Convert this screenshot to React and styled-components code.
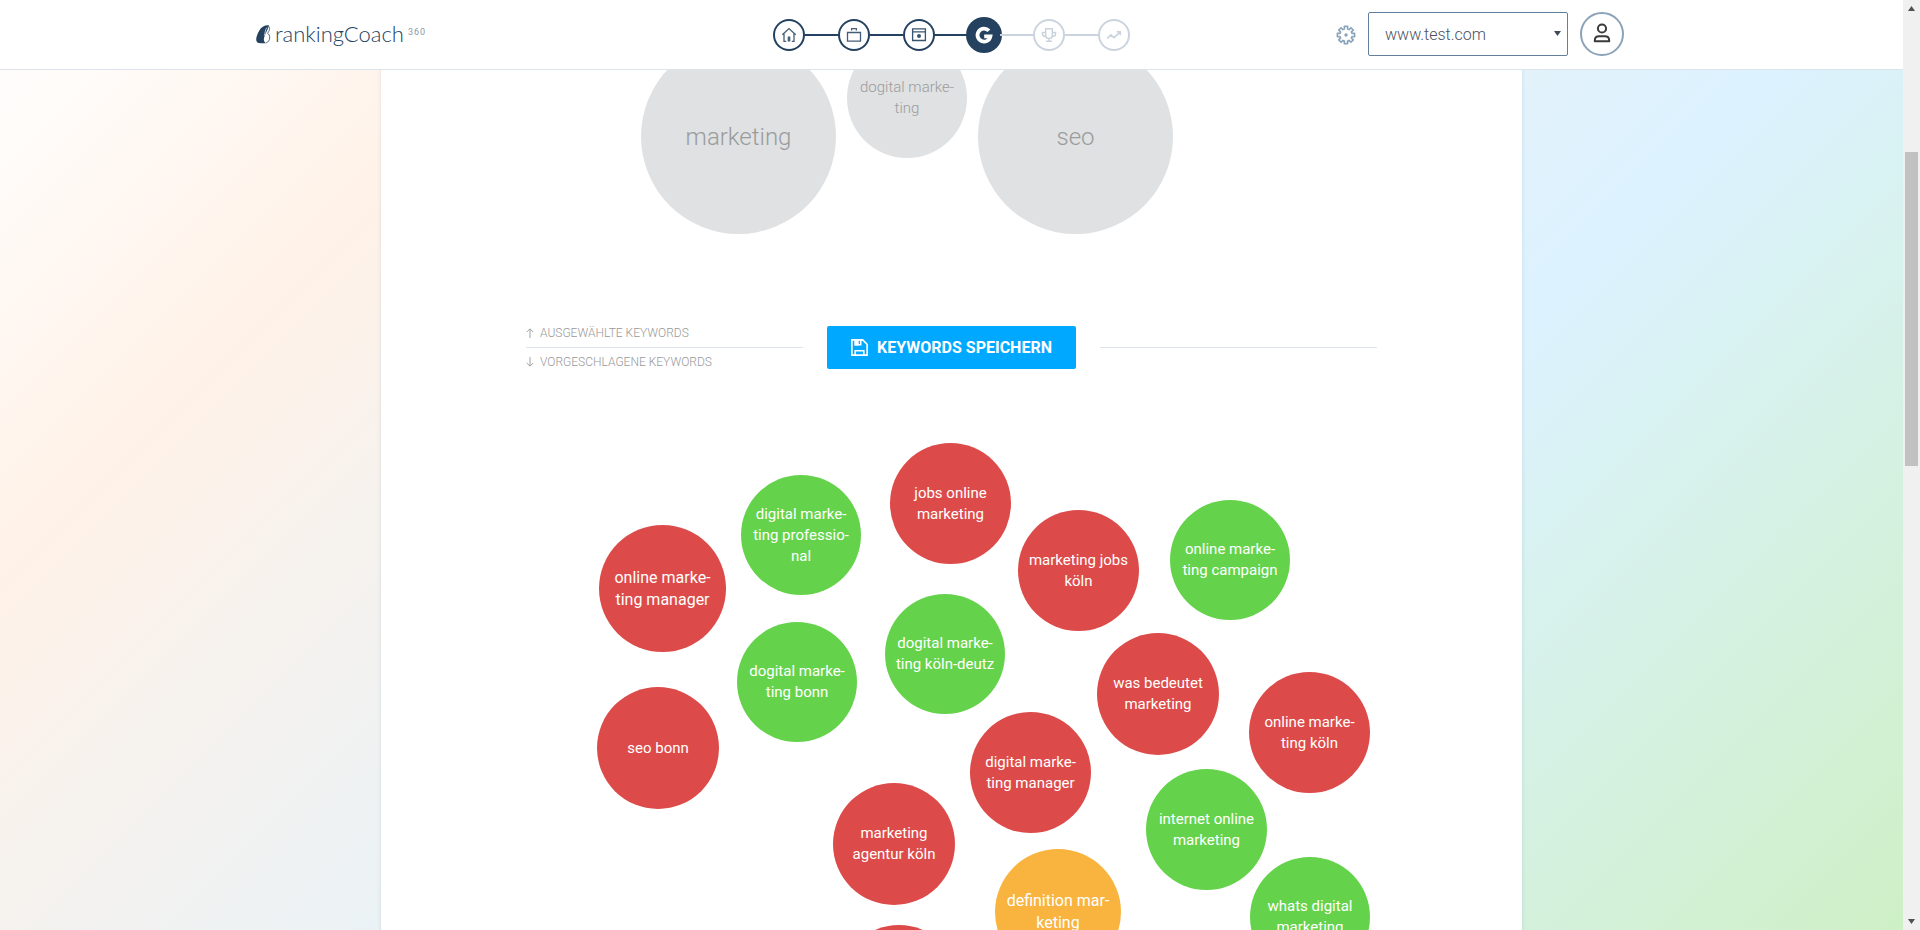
import React from "react";
import styled, { createGlobalStyle } from "styled-components";

const navy = "#24425f";
const tones = {
  red: "#dc4b49",
  green: "#64d34b",
  amber: "#f9b43f",
};

const GlobalStyle = createGlobalStyle`
  *, *::before, *::after { box-sizing: border-box; }
  body {
    margin: 0;
    font-family: Roboto, "Liberation Sans", sans-serif;
    overflow: hidden;
  }
  button, select { font: inherit; cursor: pointer; }
`;

const Shell = styled.div`
  display: grid;
  grid-template-columns: minmax(0, 1fr) 17px;
  height: 100vh;
`;

const Viewport = styled.div`
  position: relative;
  overflow: hidden;
  background: linear-gradient(135deg, #ffffff 0%, #fff2e8 20%, #dcf2ff 65%, #cef0c6 100%);
`;

/* Header */

const Header = styled.header`
  position: absolute;
  inset: 0 0 auto 0;
  z-index: 2;
  height: 70px;
  background: rgba(255, 255, 255, 0.98);
  border-bottom: 1px solid #dce3ea;
`;

const HeaderInner = styled.div`
  display: grid;
  grid-template-columns: 1fr auto 1fr;
  align-items: center;
  max-width: 1391px;
  height: 68px;
  margin: 0 auto;
`;

const Brand = styled.a`
  display: flex;
  align-items: center;
  gap: 4px;
  color: ${navy};
  text-decoration: none;
`;

const BrandName = styled.span`
  font-family: Lato, "Liberation Sans", sans-serif;
  font-size: 22px;
  font-weight: 300;
  line-height: 28px;
`;

const BrandSuffix = styled.sup`
  align-self: flex-start;
  color: #8b97a5;
  font-size: 9px;
  line-height: 24px;
  letter-spacing: 1px;
`;

const Steps = styled.nav`
  display: flex;
  align-items: center;
  padding-top: 2px;
`;

const Step = styled.button`
  display: block;
  width: 32px;
  height: 32px;
  padding: 0;
  border: 0;
  border-radius: 50%;
  color: ${(p) => (p.$state === "active" ? "#fff" : p.$state === "todo" ? "#cbd4de" : navy)};
  background: ${(p) => (p.$state === "active" ? navy : "transparent")};
  box-shadow: ${(p) => (p.$state === "active" ? `0 0 0 2px ${navy}` : "inset 0 0 0 2px currentColor")};

  svg { display: block; }
`;

const StepLink = styled.span`
  width: 33px;
  height: 2px;
  background: ${(p) => (p.$todo ? "#cbd4de" : navy)};
`;

const Tools = styled.div`
  display: flex;
  align-items: center;
  justify-content: flex-end;
  gap: 12px;
  padding-right: 23px;
`;

const GearButton = styled.button`
  display: flex;
  padding: 2px 0 0;
  border: 0;
  background: none;
  color: #8ba4ba;
`;

const SelectWrap = styled.div`
  position: relative;
  width: 200px;

  svg {
    position: absolute;
    top: 19px;
    right: 7px;
    pointer-events: none;
  }
`;

const SiteSelect = styled.select`
  appearance: none;
  width: 100%;
  height: 44px;
  padding: 0 24px 0 16px;
  border: 1px solid #637f99;
  border-radius: 2px;
  background: #fff;
  color: #4a5160;
  font-size: 16px;
  font-weight: 300;
`;

const Avatar = styled.button`
  width: 44px;
  height: 44px;
  padding: 0;
  border: 2px solid #8ba2b8;
  border-radius: 50%;
  background: #fff;
  color: #3b3b3b;

  svg { display: block; }
`;

/* Keyword panel */

const Panel = styled.main`
  max-width: 1141px;
  min-height: 100%;
  margin: 0 auto;
  padding: 0 145px;
  background: #fff;
  box-shadow: 0 0 4px rgba(60, 100, 130, 0.15);
`;

const Board = styled.section`
  position: relative;
  height: ${(p) => p.$height}px;
`;

const Bubble = styled.button`
  position: absolute;
  display: flex;
  align-items: center;
  justify-content: center;
  padding: 0 10px;
  border: 0;
  border-radius: 50%;
  background: ${(p) => tones[p.$tone] || "#dfe1e3"};
  color: ${(p) => (tones[p.$tone] ? "#fff" : "#9a9c9c")};
  font-size: ${(p) => (p.$size > 150 ? 24 : p.$size > 124 ? 16 : 15)}px;
  font-weight: ${(p) => (tones[p.$tone] ? 400 : 300)};
  line-height: ${(p) => (p.$size > 150 ? 32 : p.$size > 124 ? 22 : 21)}px;
  text-align: center;
  hyphens: manual;
`;

const SaveRow = styled.div`
  display: grid;
  grid-template-columns: 1fr auto 1fr;
  align-items: center;
  gap: 24px;
`;

const Legend = styled.div`
  display: flex;
  flex-direction: column;
`;

const LegendLabel = styled.span`
  display: flex;
  align-items: center;
  gap: 6px;
  height: 28px;
  color: #999;
  font-size: 12px;
  font-weight: 300;
  text-transform: uppercase;
`;

const Rule = styled.span`
  display: block;
  height: 1px;
  background: #dfe3ea;
`;

const SaveButton = styled.button`
  display: flex;
  align-items: center;
  gap: 9px;
  height: 43px;
  padding: 0 24px;
  border: 0;
  border-radius: 2px;
  background: #00a8ff;
  color: #fff;
  font-size: 16px;
  font-weight: 700;
  text-transform: uppercase;
`;

/* Scrollbar */

const ScrollTrack = styled.div`
  display: flex;
  flex-direction: column;
  background: #f0f0f0;
`;

const ScrollArrow = styled.button`
  display: flex;
  align-items: center;
  justify-content: center;
  height: 17px;
  padding: 0;
  border: 0;
  background: none;
`;

const ScrollGap = styled.span`
  flex: ${(p) => p.$share} 1 0;
`;

const ScrollThumb = styled.span`
  flex: 314 1 0;
  margin: 0 2px;
  background: #c1c1c1;
`;

/* Icons */

const StepIcon = ({ children }) => (
  <svg width="32" height="32" viewBox="0 0 32 32" fill="none" stroke="currentColor" strokeWidth="1.3" aria-hidden="true">
    {children}
  </svg>
);

const steps = [
  {
    label: "Start",
    state: "done",
    icon: (
      <g opacity=".85">
        <path d="M9.3 15.8 16 9.6l6.7 6.2M11 14.8v7.5h2.2M21 14.8v7.5h-2.2" />
        <path d="M14.7 17.6h2.6v5h-2.6z" fill="currentColor" stroke="none" />
      </g>
    ),
  },
  {
    label: "Unternehmen",
    state: "done",
    icon: <path opacity=".85" d="M9.5 13.5h13v8.7h-13zM13.6 11.6V9.7h4.8v1.9" />,
  },
  {
    label: "Website",
    state: "done",
    icon: (
      <g opacity=".9">
        <path d="M9.6 9.8h12.8v11.7H9.6zM9.6 12.8h12.8" />
        <circle cx="16" cy="17" r="2" fill="currentColor" stroke="none" />
      </g>
    ),
  },
  {
    label: "Google",
    state: "active",
    icon: <path strokeWidth="3.8" d="M20.9 11.8A6.5 6.5 0 1 0 22.4 17.3H16.2" />,
  },
  {
    label: "Erfolge",
    state: "todo",
    icon: (
      <path
        strokeWidth="1.5"
        d="M12.7 9.8h6.6v7c0 1.8-1.2 2.8-3.3 2.8s-3.3-1-3.3-2.8zM12.7 13.6H9.5v1.6c0 1.6 1.3 2.2 3.4 2.2M19.3 13.6h3.2v1.6c0 1.6-1.3 2.2-3.4 2.2M16 19.6v2.4M13 22.3h6"
      />
    ),
  },
  {
    label: "Statistik",
    state: "todo",
    icon: <path strokeWidth="1.6" d="M9.2 19.5l3.6-3.6 3.2 2.8 6-5.6M18.8 12.8h3.5v3.4" />,
  },
];

const gearPath =
  Array.from({ length: 8 }, (_, i) =>
    [
      [-15, 6.2],
      [-11, 8.8],
      [11, 8.8],
      [15, 6.2],
    ]
      .map(([deg, r]) => {
        const a = ((i * 45 + deg) * Math.PI) / 180;
        return `${(10 + r * Math.sin(a)).toFixed(2)} ${(10 - r * Math.cos(a)).toFixed(2)}`;
      })
      .join("L")
  ).reduce((d, tooth) => (d ? `${d}L${tooth}` : `M${tooth}`), "") + "Z";

const GearIcon = () => (
  <svg width="20" height="20" viewBox="0 0 20 20" fill="none" stroke="currentColor" strokeWidth="1.6" strokeLinejoin="round" aria-hidden="true">
    <path d={gearPath} />
    <circle cx="10" cy="10" r="1.7" fill="currentColor" stroke="none" />
  </svg>
);

const UserIcon = () => (
  <svg width="40" height="40" viewBox="2 2 40 40" fill="none" stroke="currentColor" strokeWidth="2" aria-hidden="true">
    <circle cx="22" cy="16.5" r="4.1" />
    <path strokeLinejoin="round" d="M14.8 29.3v-.8c0-2.7 1.7-4.2 4.4-4.2h5.6c2.7 0 4.4 1.5 4.4 4.2v.8z" />
  </svg>
);

const BrandMark = () => (
  <svg width="15" height="19" viewBox="0 0 15 19" aria-hidden="true">
    <path fill="currentColor" d="M13 .3C8.300 0 5.300 2 3.200 5.700 1.400 8.900.2 12 .2 14.400.2 17.200 1.900 18.200 5 18.200h5.400C8.200 17.200 7.500 15.400 8 12.900 8.700 9.400 11.700 5.600 13 .3z" />
    <path fill="none" stroke="currentColor" strokeWidth=".8" d="M12.600 1.200C14.300 3.500 13.500 5.700 11.500 8.300 14.600 9.600 14.600 16.500 10.200 17.800M8.400 2.400C6.500 5.500 8 8 7.200 11" />
    <path fill="none" stroke="#fff" strokeWidth=".7" d="M11 2.500C8.800 5 9.600 7.500 8.300 10.500" />
  </svg>
);

const SaveIcon = () => (
  <svg width="17" height="17" viewBox="0 0 17 17" fill="none" stroke="currentColor" strokeWidth="1.600" aria-hidden="true">
    <path d="M.9 .9h10.800l4.400 4.400v10.800H.9z" />
    <path d="M4.200 16v-4.300h8.600V16M4.300 1v4.700h5.400V1" />
    <path d="M4.300 1h2.600v4.700H4.300z" fill="currentColor" />
  </svg>
);

const ArrowIcon = ({ down }) => (
  <svg width="8" height="10" viewBox="0 0 8 10" fill="none" stroke="currentColor" strokeWidth=".9" aria-hidden="true">
    <path d={down ? "M4 0v9M.8 6 4 9.200 7.200 6" : "M4 10V1M.8 4 4 .8 7.200 4"} />
  </svg>
);

const Caret = ({ up, color }) => (
  <svg width="7" height="5" viewBox="0 0 7 5" fill={color} aria-hidden="true">
    <path d={up ? "M0 5 3.500 0 7 5z" : "M0 0 3.500 5 7 0z"} />
  </svg>
);

/* Data: positions are on each board's own canvas */

const selected = [
  { text: "marketing", x: 115, y: 39, size: 195 },
  { text: "dogital marke\u00ADting", x: 321, y: 38, size: 120 },
  { text: "seo", x: 452, y: 39, size: 195 },
];

const suggested = [
  { text: "online marke\u00ADting manager", tone: "red", x: 73, y: 149, size: 127 },
  { text: "digital marke\u00ADting professio\u00ADnal", tone: "green", x: 215, y: 99, size: 120 },
  { text: "jobs online marketing", tone: "red", x: 364, y: 67, size: 121 },
  { text: "marketing jobs köln", tone: "red", x: 492, y: 134, size: 121 },
  { text: "online marke\u00ADting campaign", tone: "green", x: 644, y: 124, size: 120 },
  { text: "dogital marke\u00ADting bonn", tone: "green", x: 211, y: 246, size: 120 },
  { text: "dogital marke\u00ADting köln-deutz", tone: "green", x: 359, y: 218, size: 120 },
  { text: "was bedeutet marketing", tone: "red", x: 571, y: 257, size: 122 },
  { text: "online marke\u00ADting köln", tone: "red", x: 723, y: 296, size: 121 },
  { text: "seo bonn", tone: "red", x: 71, y: 311, size: 122 },
  { text: "digital marke\u00ADting manager", tone: "red", x: 444, y: 336, size: 121 },
  { text: "internet online marketing", tone: "green", x: 620, y: 393, size: 121 },
  { text: "marketing agentur köln", tone: "red", x: 307, y: 407, size: 122 },
  { text: "definition mar\u00ADketing", tone: "amber", x: 469, y: 473, size: 126 },
  { text: "whats digital marketing", tone: "green", x: 724, y: 481, size: 120 },
  { text: "", tone: "red", x: 312, y: 549, size: 122 },
];

const Bubbles = ({ items }) =>
  items.map(({ text, tone, x, y, size }) => (
    <Bubble
      key={`${x}-${y}`}
      type="button"
      $tone={tone}
      $size={size}
      style={{ left: x, top: y, width: size, height: size }}
    >
      {text}
    </Bubble>
  ));

export default function App() {
  return (
    <>
      <GlobalStyle />
      <Shell>
        <Viewport>
          <Header>
            <HeaderInner>
              <Brand href="#">
                <BrandMark />
                <BrandName>rankingCoach</BrandName>
                <BrandSuffix>360</BrandSuffix>
              </Brand>
              <Steps aria-label="Schritte">
                {steps.map((step, i) => (
                  <React.Fragment key={step.label}>
                    {i > 0 && <StepLink $todo={step.state === "todo"} />}
                    <Step type="button" $state={step.state} aria-label={step.label}>
                      <StepIcon>{step.icon}</StepIcon>
                    </Step>
                  </React.Fragment>
                ))}
              </Steps>
              <Tools>
                <GearButton type="button" aria-label="Einstellungen">
                  <GearIcon />
                </GearButton>
                <SelectWrap>
                  <SiteSelect aria-label="Website" defaultValue="www.test.com">
                    <option>www.test.com</option>
                  </SiteSelect>
                  <Caret color="#3f4a5a" />
                </SelectWrap>
                <Avatar type="button" aria-label="Konto">
                  <UserIcon />
                </Avatar>
              </Tools>
            </HeaderInner>
          </Header>

          <Panel>
            <Board $height={319}>
              <Bubbles items={selected} />
            </Board>
            <SaveRow>
              <Legend>
                <LegendLabel>
                  <ArrowIcon />
                  Ausgewählte Keywords
                </LegendLabel>
                <Rule />
                <LegendLabel>
                  <ArrowIcon down />
                  Vorgeschlagene Keywords
                </LegendLabel>
              </Legend>
              <SaveButton type="button">
                <SaveIcon />
                Keywords speichern
              </SaveButton>
              <Rule />
            </SaveRow>
            <Board $height={700}>
              <Bubbles items={suggested} />
            </Board>
          </Panel>
        </Viewport>

        <ScrollTrack>
          <ScrollArrow type="button" aria-label="Nach oben">
            <Caret up color="#505050" />
          </ScrollArrow>
          <ScrollGap $share={135} />
          <ScrollThumb />
          <ScrollGap $share={447} />
          <ScrollArrow type="button" aria-label="Nach unten">
            <Caret color="#505050" />
          </ScrollArrow>
        </ScrollTrack>
      </Shell>
    </>
  );
}
